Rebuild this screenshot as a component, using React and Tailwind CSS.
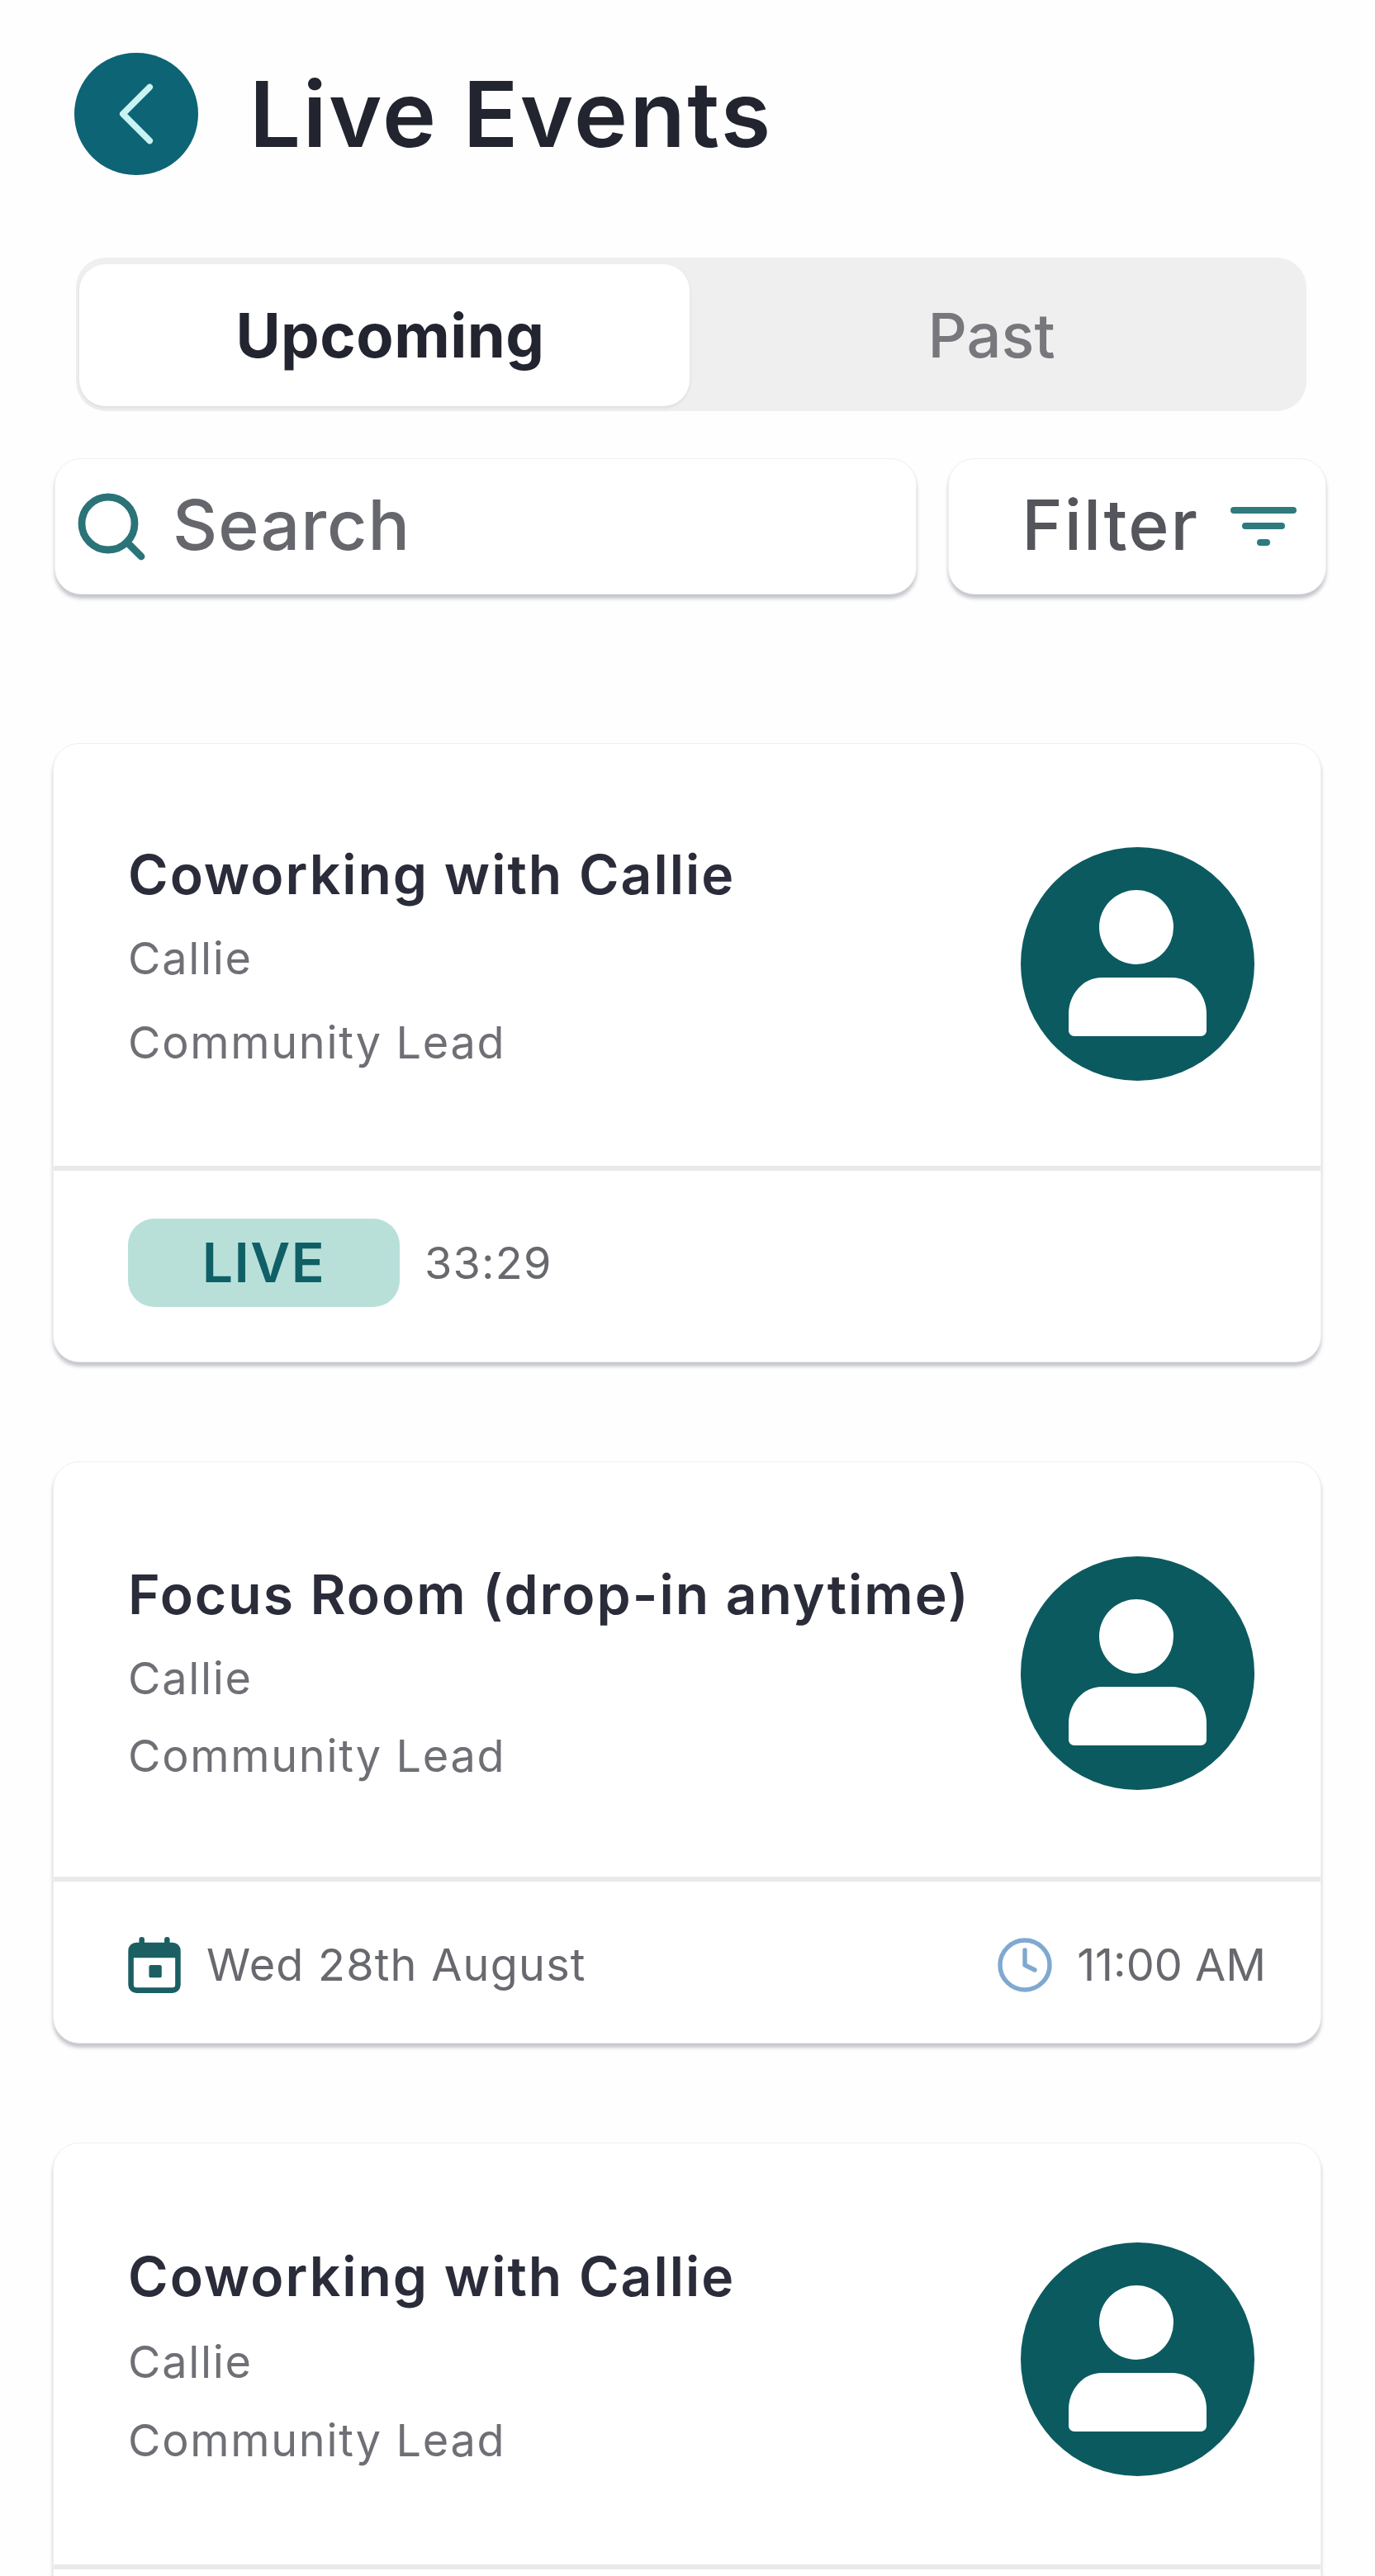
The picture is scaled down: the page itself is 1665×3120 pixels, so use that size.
import { ChevronLeft, Clock, Search } from "lucide-react"

const font = { fontFamily: "Inter, 'Noto Sans', sans-serif" }

const AvatarIcon = () => (
  <svg viewBox="0 0 283 283" className="w-[283px] h-[283px] shrink-0">
    <circle cx="141.5" cy="141.5" r="141.5" fill="#0b5a60" />
    <circle cx="140" cy="97" r="45" fill="#fff" />
    <path d="M98 158h85c24 0 42 20 42 44v20c0 4-3 7-7 7H65c-4 0-7-3-7-7v-20c0-24 18-44 40-44z" fill="#fff" />
  </svg>
)

const CalendarIcon = () => (
  <svg viewBox="0 0 32 32" className="w-[70px] h-[70px] shrink-0 -ml-[3px]" fill="none">
    <path d="M9 2v6M23 2v6" stroke="#1b5f63" strokeWidth="3" strokeLinecap="round" />
    <rect x="3" y="5" width="26" height="25" rx="3" stroke="#1b5f63" strokeWidth="3" />
    <rect x="3" y="5" width="26" height="7" fill="#1b5f63" />
    <rect x="13" y="16" width="7" height="7" rx="1" fill="#1b5f63" />
  </svg>
)

const FilterIcon = () => (
  <svg viewBox="0 0 80 50" className="w-[80px] h-[50px] shrink-0" fill="none" stroke="#2e7a7e" strokeWidth="8" strokeLinecap="round">
    <path d="M4 5h72M18 24h44M36 44h8" />
  </svg>
)

const Card = ({ title, cardClass, bodyClass, callieClass, leadClass, avatarClass, footerClass, children }) => (
  <div className={`ml-[64px] w-[1536px] shrink-0 rounded-[32px] bg-white border border-[#f0f0f2] shadow-[0_5px_4px_rgba(90,95,110,0.35)] overflow-hidden ${cardClass}`}>
    <div className={`flex justify-between pl-[90px] pr-[80px] border-b-[6px] border-[#e9e9ec] ${bodyClass}`}>
      <div className="flex flex-col">
        <div className="text-[66px] leading-[72px] font-semibold text-[#2a2c3a] tracking-[2px] whitespace-nowrap">{title}</div>
        <div className={`text-[54px] leading-[60px] text-[#6f7076] tracking-[1.7px] ${callieClass}`}>Callie</div>
        <div className={`text-[54px] leading-[60px] text-[#6f7076] tracking-[1.7px] ${leadClass}`}>Community Lead</div>
      </div>
      <div className={avatarClass}>
        <AvatarIcon />
      </div>
    </div>
    <div className={footerClass}>{children}</div>
  </div>
)

export default function App() {
  return (
    <div className="w-[1665px] h-[3120px] overflow-hidden bg-[#fefefe] flex flex-col" style={font}>
      <div className="shrink-0 flex items-center gap-[62px] pl-[90px] pt-[64px]">
        <div className="w-[150px] h-[148px] rounded-full bg-[#0d6475] flex items-center justify-center">
          <ChevronLeft size={130} strokeWidth={1.4} color="#c9f3f3" />
        </div>
        <h1 className="text-[110px] leading-[120px] font-semibold text-[#22242f] tracking-[2.5px]">Live Events</h1>
      </div>

      <div className="shrink-0 mt-[100px] ml-[92px] w-[1490px] h-[186px] rounded-[36px] bg-[#f0eff0] flex pt-[8px] pb-[6px] pl-[4px]">
        <div className="w-[739px] h-full pl-[14px] rounded-[32px] bg-white shadow-[0_2px_4px_rgba(0,0,0,0.08)] flex items-center justify-center text-[74px] font-bold text-[#22242f] tracking-[0.5px]">
          Upcoming
        </div>
        <div className="flex-1 pr-[16px] flex items-center justify-center text-[74px] font-medium text-[#77777c]">Past</div>
      </div>

      <div className="shrink-0 mt-[57px] ml-[66px] flex gap-[38px]">
        <div className="w-[1044px] h-[165px] rounded-[32px] bg-white border border-[#f0f0f2] shadow-[0_5px_4px_rgba(90,95,110,0.35)] flex items-center pl-[20px] gap-[26px]">
          <Search size={96} strokeWidth={2.2} color="#2a7378" className="shrink-0" />
          <span className="text-[84px] font-medium text-[#66676c] tracking-[1px] -mt-[4px]">Search</span>
        </div>
        <div className="w-[458px] h-[165px] rounded-[32px] bg-white border border-[#f0f0f2] shadow-[0_5px_4px_rgba(90,95,110,0.35)] flex items-center justify-end pr-[35px] gap-[38px]">
          <span className="text-[84px] font-medium text-[#55565b] tracking-[2px] -mt-[4px]">Filter</span>
          <FilterIcon />
        </div>
      </div>

      <div className="shrink-0 mt-[180px] flex flex-col">
        <Card
          title="Coworking with Callie"
          cardClass="h-[750px]"
          bodyClass="h-[517px] pt-[122px]"
          callieClass="mt-[36px]"
          leadClass="mt-[42px]"
          avatarClass="mt-[3px]"
          footerClass="flex items-center pl-[90px] pt-[58px] gap-[30px]"
        >
          <div className="w-[329px] h-[107px] rounded-[32px] bg-[#b8e0d9] flex items-center justify-center text-[66px] font-semibold text-[#0f5f66] tracking-[1.5px]">
            LIVE
          </div>
          <span className="text-[54px] text-[#68696e] tracking-[1.2px]">33:29</span>
        </Card>

        <div className="h-[120px] shrink-0" />

        <Card
          title="Focus Room (drop-in anytime)"
          cardClass="h-[705px]"
          bodyClass="h-[508px] pt-[124px]"
          callieClass="mt-[36px]"
          leadClass="mt-[34px]"
          avatarClass="-mt-[10px]"
          footerClass="flex items-center justify-between pl-[90px] pr-[66px] pt-[60px]"
        >
          <div className="flex items-center gap-[28px]">
            <CalendarIcon />
            <span className="text-[54px] text-[#68696e] tracking-[1.2px]">Wed 28th August</span>
          </div>
          <div className="flex items-center gap-[27px]">
            <Clock size={72} strokeWidth={1.8} color="#7fa9d0" />
            <span className="text-[54px] text-[#68696e]">11:00 AM</span>
          </div>
        </Card>

        <div className="h-[120px] shrink-0" />

        <Card
          title="Coworking with Callie"
          cardClass="h-[700px]"
          bodyClass="h-[516px] pt-[125px]"
          callieClass="mt-[38px]"
          leadClass="mt-[35px]"
          avatarClass="-mt-[5px]"
          footerClass="h-[100px]"
        />
      </div>
    </div>
  )
}
